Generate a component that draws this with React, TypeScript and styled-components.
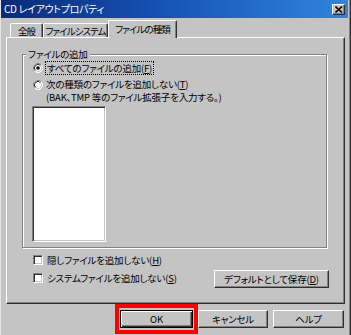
import styled, { createGlobalStyle } from 'styled-components'

const GlobalStyle = createGlobalStyle`
  html, body {
    margin: 0;
    padding: 0;
    background: #c4c4c4;
  }
  body {
    font-family: "Noto Sans CJK JP", "Noto Sans", sans-serif;
    font-size: 9.5px;
    letter-spacing: -0.2px;
    font-feature-settings: "palt";
    color: #000;
  }
`

const Face = '#c4c4c4'
const Shadow = '#808080'
const DarkShadow = '#303030'

const RadioMark: React.FC<{ checked?: boolean }> = ({ checked }) => (
  <svg width="10" height="10" viewBox="0 0 10 10">
    <circle cx="5" cy="5" r="4.5" fill="#fff" />
    <path d="M8.2 1.8 A4.5 4.5 0 0 0 1.8 8.2" stroke={Shadow} fill="none" />
    <path d="M1.8 8.2 A4.5 4.5 0 0 0 8.2 1.8" stroke="#fff" fill="none" />
    <path d="M7.5 2.5 A3.5 3.5 0 0 0 2.5 7.5" stroke={DarkShadow} fill="none" />
    <path d="M2.5 7.5 A3.5 3.5 0 0 0 7.5 2.5" stroke={Face} fill="none" />
    {checked && <circle cx="5" cy="5" r="1.8" fill="#000" />}
  </svg>
)

const CloseIcon = () => (
  <svg width="8" height="7" viewBox="0 0 8 7">
    <path d="M0.5 0.5 L7 6.5 M7 0.5 L0.5 6.5" stroke="#000" strokeWidth="1.6" />
  </svg>
)

export default function App() {
  return (
    <>
      <GlobalStyle />
      <Window>
        <TitleBar>
          <Title>CD レイアウトプロパティ</Title>
          <CloseButton>
            <CloseIcon />
          </CloseButton>
        </TitleBar>
        <Body>
          <TabStrip>
            <Tab $w={33}>全般</Tab>
            <Tab $w={65}>ファイルシステム</Tab>
            <Tab $w={69} $active>
              ファイルの種類
            </Tab>
          </TabStrip>
          <Panel>
            <Group>
              <Legend>ファイルの追加</Legend>
              <RadioRow>
                <RadioMark checked />
                <FocusLabel>
                  すべてのファイルの追加(<u>F</u>)
                </FocusLabel>
              </RadioRow>
              <RadioRow $gap={3}>
                <RadioMark />
                <Lines>
                  <Label>
                    次の種類のファイルを追加しない(<u>T</u>)
                  </Label>
                  <Label>(BAK、TMP 等のファイル拡張子を入力する。)</Label>
                </Lines>
              </RadioRow>
              <ListBox />
            </Group>
            <Bottom>
              <CheckList>
                <CheckRow>
                  <CheckMark />
                  <Label>
                    隠しファイルを追加しない(<u>H</u>)
                  </Label>
                </CheckRow>
                <CheckRow>
                  <CheckMark />
                  <Label>
                    システムファイルを追加しない(<u>S</u>)
                  </Label>
                </CheckRow>
              </CheckList>
              <Button $w={115} style={{ marginTop: 16 }}>
                デフォルトとして保存(<u>D</u>)
              </Button>
            </Bottom>
          </Panel>
          <ButtonRow>
            <OkWrap>
              <Button $w={73} $default>
                OK
              </Button>
              <Highlight />
            </OkWrap>
            <Button $w={70}>キャンセル</Button>
            <Button $w={71}>ヘルプ</Button>
          </ButtonRow>
        </Body>
      </Window>
    </>
  )
}

const Window = styled.div`
  width: 351px;
  height: 335px;
  box-sizing: border-box;
  background: ${Face};
  box-shadow: inset 1px 0 0 #e4e4e4, inset -1px 0 0 ${DarkShadow},
    inset -2px 0 0 ${Shadow};
  overflow: hidden;
`

const TitleBar = styled.div`
  height: 18px;
  margin: 0 3px 0 1px;
  display: flex;
  align-items: center;
  justify-content: space-between;
  padding: 0 3px 0 3px;
  background: linear-gradient(90deg, #0a2a78 0%, #1552b4 45%, #2f84de 100%);
`

const Title = styled.span`
  color: #fff;
  font-size: 10px;
  line-height: 12px;
  letter-spacing: -0.3px;
`

const CloseButton = styled.div`
  width: 13px;
  height: 11px;
  box-sizing: border-box;
  display: flex;
  align-items: center;
  justify-content: center;
  background: ${Face};
  border: 1px solid;
  border-color: #fff ${DarkShadow} ${DarkShadow} #fff;
  box-shadow: inset -1px -1px 0 ${Shadow};
`

const Body = styled.div`
  padding: 0 6px;
`

const TabStrip = styled.div`
  margin-top: 2px;
  height: 17px;
  padding-left: 4px;
  display: flex;
  align-items: flex-end;
`

const Tab = styled.div<{ $w: number; $active?: boolean }>`
  width: ${(p) => p.$w}px;
  height: ${(p) => (p.$active ? 18 : 14)}px;
  margin-bottom: ${(p) => (p.$active ? -1 : 0)}px;
  box-sizing: border-box;
  position: relative;
  z-index: ${(p) => (p.$active ? 1 : 0)};
  display: flex;
  align-items: center;
  justify-content: center;
  padding-bottom: ${(p) => (p.$active ? 2 : 0)}px;
  background: ${Face};
  border-top: 1px solid #fff;
  border-left: 1px solid #fff;
  border-right: 1px solid ${DarkShadow};
  border-radius: 2px 2px 0 0;
  box-shadow: inset -1px 0 0 ${Shadow};
  line-height: 12px;
  letter-spacing: -0.9px;
  white-space: nowrap;
`

const Panel = styled.div`
  height: 267px;
  box-sizing: border-box;
  padding: 10px 17px 0 15px;
  border: 1px solid;
  border-color: #fff ${DarkShadow} ${DarkShadow} #fff;
  box-shadow: inset -1px -1px 0 ${Shadow};
`

const Group = styled.fieldset`
  margin: 0;
  height: 200px;
  box-sizing: border-box;
  padding: 1px 0 5px 10px;
  border: 1px solid ${Shadow};
  box-shadow: inset 1px 1px 0 #fff, 1px 1px 0 #fff;
  min-width: 0;
`

const Legend = styled.legend`
  margin-left: -7px;
  padding: 0 2px;
  line-height: 12px;
  background: ${Face};
`

const RadioRow = styled.div<{ $gap?: number }>`
  display: flex;
  align-items: flex-start;
  gap: 2px;
  margin-top: ${(p) => p.$gap ?? 0}px;

  svg {
    margin-top: 2px;
    flex: none;
  }
`

const Lines = styled.div`
  display: flex;
  flex-direction: column;
  gap: 1px;
  padding-left: 1px;
`

const Label = styled.span`
  line-height: 12px;
  white-space: nowrap;
`

const FocusLabel = styled(Label)`
  padding: 0 1px;
  border: 1px dotted #000;
`

const ListBox = styled.div`
  margin: 3px 0 0 -1px;
  width: 74px;
  height: 136px;
  box-sizing: border-box;
  background: #fff;
  border: 1px solid;
  border-color: ${Shadow} #fff #fff ${Shadow};
  box-shadow: inset 1px 1px 0 ${DarkShadow}, inset -1px -1px 0 ${Face};
`

const Bottom = styled.div`
  margin: 6px -2px 0 11px;
  display: flex;
  align-items: flex-start;
  justify-content: space-between;
`

const CheckList = styled.div`
  display: flex;
  flex-direction: column;
  gap: 6px;
`

const CheckRow = styled.div`
  display: flex;
  align-items: center;
  gap: 4px;
`

const CheckMark = styled.span`
  width: 10px;
  height: 10px;
  box-sizing: border-box;
  background: #fff;
  border: 1px solid;
  border-color: ${Shadow} #fff #fff ${Shadow};
  box-shadow: inset 1px 1px 0 ${DarkShadow}, inset -1px -1px 0 ${Face};
`

const Button = styled.div<{ $w: number; $default?: boolean }>`
  width: ${(p) => p.$w}px;
  height: 18px;
  box-sizing: border-box;
  display: flex;
  align-items: center;
  justify-content: center;
  background: ${Face};
  line-height: 12px;
  white-space: nowrap;
  border: 1px solid;
  border-color: ${(p) =>
    p.$default ? '#000' : `#fff ${DarkShadow} ${DarkShadow} #fff`};
  box-shadow: ${(p) =>
    p.$default
      ? `inset 1px 1px 0 #fff, inset -1px -1px 0 ${DarkShadow}, inset -2px -2px 0 ${Shadow}`
      : `inset -1px -1px 0 ${Shadow}`};
`

const ButtonRow = styled.div`
  margin-top: 6px;
  padding-right: 1px;
  display: flex;
  justify-content: flex-end;
  gap: 5px;
`

const OkWrap = styled.div`
  position: relative;
`

const Highlight = styled.div`
  position: absolute;
  inset: -6px -5px -6px -5px;
  border: 4px solid #f00;
`
